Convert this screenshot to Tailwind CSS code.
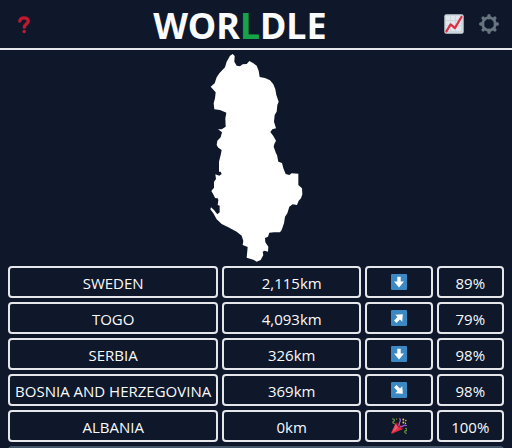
<!DOCTYPE html>
<html lang="en">
<head>
<meta charset="utf-8">
<meta name="viewport" content="width=device-width, initial-scale=1">
<title>Worldle</title>
<script src="https://cdn.jsdelivr.net/npm/@tailwindcss/browser@4"></script>
</head>
<body class="min-h-screen overflow-x-hidden bg-[#0f172a] font-['Open_Sans','Noto_Sans',sans-serif] text-base text-slate-50 [scrollbar-width:none]">
<svg class="hidden" aria-hidden="true">
  <symbol id="arrow" viewBox="0 0 16 16"><path fill="#fff" d="M6.300 2.700h3.400v4.900h3.300L8 13.400 3 7.600h3.300z"/></symbol>
</svg>
<header class="flex items-center border-b-2 border-gray-200 pr-[13px] pl-3">
  <button aria-label="How to play" class="flex h-12 w-6 items-center justify-center">
    <svg class="size-5" viewBox="0 0 20 20"><path d="M5.800 7.200C6.300 2.500 14.300 2.800 14.300 7.200c0 3-4 2.900-4 6" fill="none" stroke="#be1931" stroke-width="3.300" stroke-linecap="round"/><circle cx="10.200" cy="17.500" r="1.800" fill="#be1931"/></svg>
  </button>
  <h1 class="flex-1 pt-1 text-center text-4xl leading-11 font-bold font-['Noto_Sans','Open_Sans',sans-serif]">WOR<span class="text-[#16a34a]">L</span>DLE</h1>
  <button aria-label="Statistics" class="mr-[15px] flex h-12 w-5 items-center justify-center">
    <svg class="size-5" viewBox="0 0 20 20"><rect width="19.4" height="19.4" x=".3" y=".3" rx="2" fill="#ccd6dd"/><path fill="#e1e8ed" d="M2 2h4v4H2zM7 2h4v4H7zM12 2h5v4h-5zM2 7h4v4H2zM7 7h4v4H7zM12 7h5v4h-5zM2 12h4v5H2zM7 12h4v5H7zM12 12h5v5h-5z"/><path fill="none" stroke="#dd2e44" stroke-width="2.200" stroke-linecap="round" stroke-linejoin="round" d="m2.400 17.400 4.200-7 4.300 3.700 6.600-11.300"/></svg>
  </button>
  <button aria-label="Settings" class="flex h-12 w-5 items-center justify-center">
    <svg class="size-5" viewBox="0 0 20 20"><g stroke="#66757f" fill="none"><circle cx="10" cy="10" r="6.300" stroke-width="2.700"/><path stroke-width="3.400" stroke-linecap="round" d="M10 1.700v2M10 16.300v2M1.700 10h2M16.300 10h2M4.100 4.100l1 1M14.900 14.900l1 1M15.900 4.100l-1 1M5.100 14.900l-1 1"/></g></svg>
  </button>
</header>
<main>
  <svg class="mx-auto h-54 w-28" viewBox="0 0 336 648" role="img" aria-label="Country outline"><path fill="#fff" d="M98 12L104 18 103 35 110 47 120 49 128 43 140 42 148 33 160 40 170 47 176 62 179 81 195 84 210 91 220 103 226 118 229 135 236 155 232 165 230 185 224 195 222 215 228 235 217 238 211 246 220 258 228 272 223 282 221 290 228 310 231 315 235 335 246 339 250 355 257 372 268 375 275 370 295 371 295 405 306 415 307 433 303 445 296 452 291 465 278 463 268 470 262 490 255 500 252 520 245 540 240 547 222 547 208 548 204 560 195 564 196 577 205 590 204 605 194 602 188 605 190 615 182 630 170 635 160 629 140 623 143 591 128 585 130 573 125 557 110 545 85 532 65 522 50 508 40 490 31 478 33 472 42 480 52 493 59 487 59 467 53 465 55 450 45 443 38 430 34 423 42 413 42 395 48 387 46 373 58 377 65 372 62 365 57 365 57 335 62 315 65 300 55 293 50 285 52 272 62 262 66 247 54 238 65 238 77 230 76 205 79 188 60 180 43 178 41 160 45 145 47 127 32 110 44 100 50 82 58 70 75 52 80 35 90 17z"/><path fill="#0f172a" d="M47 446l5-3 3 7-3 5z"/></svg>
  <div id="guesses" class="grid grid-cols-7 gap-1 px-2 text-center text-[15px] [&>div]:flex [&>div]:h-8 [&>div]:items-center [&>div]:justify-center [&>div]:rounded [&>div]:border-2 [&>div]:border-gray-200 [&>div]:whitespace-nowrap">
    <div class="col-span-3 pt-0.5">SWEDEN</div><div class="col-span-2 pt-0.5">2,115km</div>
    <div><svg class="size-4 rounded-[1px] bg-[#3b88c3]" viewBox="0 0 16 16" role="img" aria-label="South"><use href="#arrow" width="16" height="16"/></svg></div><div class="pt-0.5">89%</div>
    <div class="col-span-3 pt-0.5">TOGO</div><div class="col-span-2 pt-0.5">4,093km</div>
    <div><svg class="size-4 rounded-[1px] bg-[#3b88c3]" viewBox="0 0 16 16" role="img" aria-label="North-east"><use href="#arrow" width="16" height="16" transform="rotate(-135 8 8)"/></svg></div><div class="pt-0.5">79%</div>
    <div class="col-span-3 pt-0.5">SERBIA</div><div class="col-span-2 pt-0.5">326km</div>
    <div><svg class="size-4 rounded-[1px] bg-[#3b88c3]" viewBox="0 0 16 16" role="img" aria-label="South"><use href="#arrow" width="16" height="16"/></svg></div><div class="pt-0.5">98%</div>
    <div class="col-span-3 pt-0.5">BOSNIA AND HERZEGOVINA</div><div class="col-span-2 pt-0.5">369km</div>
    <div><svg class="size-4 rounded-[1px] bg-[#3b88c3]" viewBox="0 0 16 16" role="img" aria-label="South-east"><use href="#arrow" width="16" height="16" transform="rotate(-45 8 8)"/></svg></div><div class="pt-0.5">98%</div>
    <div class="col-span-3 pt-0.5">ALBANIA</div><div class="col-span-2 pt-0.5">0km</div>
    <div><svg class="size-4" viewBox="0 0 16 16" role="img" aria-label="Correct"><path fill="#dd2e44" d="M5 4.500 12 11 1 15.700 0 15z"/><path fill="#ea596e" d="M4.800 5.500 7 10l-5.800 4.700z"/><path fill="#a0041e" d="M5 4.500c1.500-.8 7.800 5 7 6.500-1.800.7-7.500-4.500-7-6.500"/><g fill="none" stroke-width="1.300" stroke-linecap="round"><path stroke="#5c913b" d="M1.600.8c2 .2 2.500 1.600 1 2.600s-.6 2 .8 2.200M15.200 15.300c-2-.8-2-2.300-.3-2.600s1.300-1.800-.2-2.300"/><path stroke="#9266cc" d="M8.800.8c1.400 1.500.2 2.500-.3 3.600s.5 1.800-.8 3M15.300 7.500c-1.800-1-2.500.3-3.500.7s-1.500-.2-2.500.7"/></g><g fill="#ffcc4d"><circle cx="12.300" cy="1.500" r=".9"/><circle cx="14.800" cy="2.500" r=".8"/><circle cx="12.400" cy="4.400" r="1"/><circle cx="14.500" cy="5.200" r=".7"/><circle cx="5.500" cy="1" r=".5"/></g></svg></div><div class="pt-0.5">100%</div>
  </div>
  <div class="mx-2 mt-1 h-8 rounded bg-slate-600"></div>
</main>
</body>
</html>
